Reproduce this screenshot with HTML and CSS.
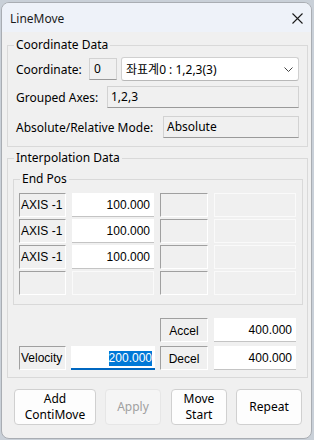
FILE: index.html
```html
<!DOCTYPE html>
<html>
<head>
<meta charset="utf-8">
<link rel="stylesheet" href="styles.css">
</head>
<body>
<div class="window">
  <div class="titlebar">
    <span class="title">LineMove</span>
    <svg class="close" width="11" height="11" viewBox="0 0 11 11"><path d="M0.5 0.5 L10.5 10.5 M10.5 0.5 L0.5 10.5" stroke="#1b1b1b" stroke-width="1.1" fill="none"/></svg>
  </div>
  <div class="content">
    <fieldset class="group coord">
      <legend>Coordinate Data</legend>
      <div class="row r1">
        <span class="lbl">Coordinate:</span>
        <div class="fields">
          <div class="ro tb0">0</div>
          <div class="combo"><span class="ctext"><span class="ko">좌표계</span>0 : 1,2,3(3)</span>
            <svg class="chev" width="9" height="5" viewBox="0 0 9 5"><path d="M0.5 0.5 L4.5 4.5 L8.5 0.5" stroke="#444" stroke-width="1" fill="none"/></svg>
          </div>
        </div>
      </div>
      <div class="row r2">
        <span class="lbl">Grouped Axes:</span>
        <div class="ro grouped">1,2,3</div>
      </div>
      <div class="row r3">
        <span class="lbl">Absolute/Relative Mode:</span>
        <div class="ro mode">Absolute</div>
      </div>
    </fieldset>

    <fieldset class="group interp">
      <legend>Interpolation Data</legend>
      <fieldset class="group endpos">
        <legend>End Pos</legend>
        <div class="grid pos">
          <div class="cell sunk axis">AXIS -1</div>
          <div class="cell val">100.000</div>
          <div class="cell sunk"></div>
          <div class="cell dis"></div>

          <div class="cell sunk axis">AXIS -1</div>
          <div class="cell val">100.000</div>
          <div class="cell sunk"></div>
          <div class="cell dis"></div>

          <div class="cell sunk axis">AXIS -1</div>
          <div class="cell val">100.000</div>
          <div class="cell sunk"></div>
          <div class="cell dis"></div>

          <div class="cell sunk"></div>
          <div class="cell dis"></div>
          <div class="cell sunk"></div>
          <div class="cell dis"></div>
        </div>
      </fieldset>
      <div class="grid motion">
        <div class="cell empty"></div>
        <div class="cell empty"></div>
        <div class="cell sunk center">Accel</div>
        <div class="cell val">400.000</div>

        <div class="cell sunk axis">Velocity</div>
        <div class="cell val focus"><span class="sel">200.000</span></div>
        <div class="cell sunk center">Decel</div>
        <div class="cell val">400.000</div>
      </div>
    </fieldset>

    <div class="buttons">
      <button class="btn b1"><span class="bl">Add</span><span class="bl">ContiMove</span></button>
      <button class="btn b2" disabled>Apply</button>
      <button class="btn b3"><span class="bl">Move</span><span class="bl">Start</span></button>
      <button class="btn b4">Repeat</button>
    </div>
  </div>
</div>
</body>
</html>
```
FILE: styles.css
```css
* { box-sizing: border-box; }
html, body { margin: 0; padding: 0; }
body {
  width: 314px;
  height: 440px;
  background: #c9d0d8;
  overflow: hidden;
  font-family: "Noto Sans", "Noto Sans CJK KR", sans-serif;
  font-size: 12px;
  color: #000;
}
.window {
  margin: 2px 0 0 1px;
  width: 311px;
  height: 437px;
  background: #f0f0f0;
  border: 1px solid #a9adb3;
  border-radius: 8px;
  overflow: hidden;
}
.titlebar {
  height: 29px;
  background: #eef2f9;
  display: flex;
  align-items: center;
  justify-content: space-between;
  padding: 0 8px 0 8px;
}
.title {
  font-size: 12px;
  color: #1b1b1b;
  padding-top: 1px;
}
.close { margin-top: 1px; }
.content {
  padding: 0 0 0 5px;
}
fieldset.group {
  margin: 0;
  padding: 0;
  border: 1px solid #d9d9d9;
  min-inline-size: 0;
}
fieldset.group legend {
  margin-left: 6px;
  padding: 0 2px;
  height: 16px;
  line-height: 16px;
  font-size: 12px;
}
.coord {
  width: 301px;
  margin-top: 5px !important;
  padding: 4px 8px 8px 8px !important;
}
.coord > legend { margin-left: -2px !important; }
.row {
  display: flex;
  align-items: center;
  justify-content: space-between;
}
.lbl { white-space: nowrap; }
.r1 { height: 24px; }
.r2 { margin-top: 5px; height: 22px; }
.r3 { margin-top: 8px; height: 22px; }
.fields { display: flex; align-items: center; gap: 4px; }
.ro {
  height: 22px;
  background: #f0f0f0;
  border: 1px solid #d2d2d2;
  border-bottom-color: #9a9a9a;
  padding: 0 3px;
  line-height: 19px;
  white-space: nowrap;
}
.tb0 { width: 28px; padding-left: 4px; }
.combo {
  width: 178px;
  height: 24px;
  background: #fff;
  border: 1px solid #d0d0d0;
  border-bottom-color: #b8b8b8;
  border-radius: 3px;
  display: flex;
  align-items: center;
  justify-content: space-between;
  padding: 0 5px 0 4px;
}
.ctext { line-height: 20px; }
.ko { font-family: "Noto Sans CJK KR", sans-serif; }
.chev { margin-top: 1px; }
.grouped { width: 192px; }
.mode { width: 136px; }

.interp {
  width: 301px;
  margin-top: 3px !important;
  padding: 5px 0 7px 0 !important;
}
.endpos {
  width: 290px;
  margin-left: 5px !important;
  padding: 6px 0 9px 5px !important;
}
.endpos > legend { margin-left: 1px !important; }
.grid {
  display: grid;
  grid-template-columns: 47px 82px 48px 82px;
  column-gap: 6px;
  font-family: "Liberation Sans", Arial, sans-serif;
  font-size: 12px;
}
.pos {
  grid-auto-rows: 24px;
  row-gap: 2px;
}
.motion {
  margin: 13px 0 0 11px;
  grid-auto-rows: 24px;
  row-gap: 4px;
}
.cell {
  display: flex;
  align-items: center;
  white-space: nowrap;
}
.sunk {
  background: #f0f0f0;
  border: 1px solid;
  border-color: #a0a0a0 #ffffff #ffffff #a0a0a0;
}
.axis { padding-left: 1px; }
.center { justify-content: center; padding-top: 1px; }
.val {
  background: #fff;
  border-bottom: 1px solid #c4c4c4;
  justify-content: flex-end;
  padding-right: 4px;
}
.dis {
  background: #f0f0f0;
  border: 1px solid #fafafa;
}
.empty { background: transparent; }
.focus {
  margin: 0 -1px 0 -1px;
  border-bottom: 2px solid #0067c0;
  padding-right: 3px;
}
.sel {
  background: #0078d7;
  color: #fff;
  line-height: 15px;
  margin-top: 2px;
}

.buttons {
  display: flex;
  gap: 9px;
  margin: 11px 0 0 7px;
}
.btn {
  height: 36px;
  background: #fdfdfd;
  border: 1px solid #d0d0d0;
  border-radius: 4px;
  font-family: "Noto Sans", sans-serif;
  font-size: 12px;
  line-height: 16px;
  color: #000;
  padding: 0;
  display: flex;
  flex-direction: column;
  align-items: center;
  justify-content: center;
}
.bl { display: block; line-height: 16px; }
.b1 { width: 82px; }
.b2 { width: 56px; background: #f5f5f5; border-color: #e6e6e6; color: #a0a0a0; }
.b3 { width: 56px; margin-left: 1px; }
.b4 { width: 66px; }
```
